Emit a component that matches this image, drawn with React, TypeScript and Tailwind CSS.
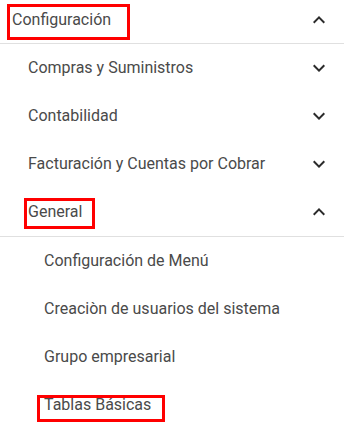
import { MdExpandLess, MdExpandMore } from "react-icons/md";

// Nested settings menu with three red annotation boxes drawn over the labels.
function RedMark({ mark }: { mark: string }) {
  return <span className={`pointer-events-none absolute border-[3px] border-[#ff0000] ${mark}`} />;
}

function Row({
  label,
  indent,
  open,
  chevron = true,
  mark,
  className = "h-12",
}: {
  label: string;
  indent: string;
  open?: boolean;
  chevron?: boolean;
  mark?: string;
  className?: string;
}) {
  return (
    <div className={`flex items-center pr-[13px] ${indent} ${className}`}>
      <div className="flex-1 min-w-0">
        <span className="relative inline-block whitespace-nowrap leading-6">
          {label}
          {mark && <RedMark mark={mark} />}
        </span>
      </div>
      {chevron &&
        (open ? (
          <MdExpandLess className="shrink-0 text-[#2b2b2b]" size={24} />
        ) : (
          <MdExpandMore className="shrink-0 text-[#2b2b2b]" size={24} />
        ))}
    </div>
  );
}

export default function App() {
  return (
    <div
      className="w-[344px] h-[442px] overflow-hidden bg-white text-[16px] text-[#4a4a4a]"
      style={{ fontFamily: "Roboto, 'Liberation Sans', sans-serif" }}
    >
      <Row
        label="Configuración"
        indent="pl-3"
        open
        className="h-[43px] pb-[3px]"
        mark="-left-[5px] -top-[4px] w-[123px] h-[36px]"
      />
      <div className="h-px bg-[#e0e0e0]" />
      <Row label="Compras y Suministros" indent="pl-7" />
      <Row label="Contabilidad" indent="pl-7" />
      <Row label="Facturación y Cuentas por Cobrar" indent="pl-7" />
      <Row
        label="General"
        indent="pl-7"
        open
        mark="-left-[4px] -top-[2px] w-[71px] h-[31px]"
      />
      <div className="h-px bg-[#e0e0e0]" />
      <Row label="Configuración de Menú" indent="pl-11" chevron={false} />
      <Row label="Creaciòn de usuarios del sistema" indent="pl-11" chevron={false} />
      <Row label="Grupo empresarial" indent="pl-11" chevron={false} />
      <Row
        label="Tablas Básicas"
        indent="pl-11"
        chevron={false}
        mark="-left-[7px] top-[2px] w-[128px] h-[27px]"
      />
    </div>
  );
}
